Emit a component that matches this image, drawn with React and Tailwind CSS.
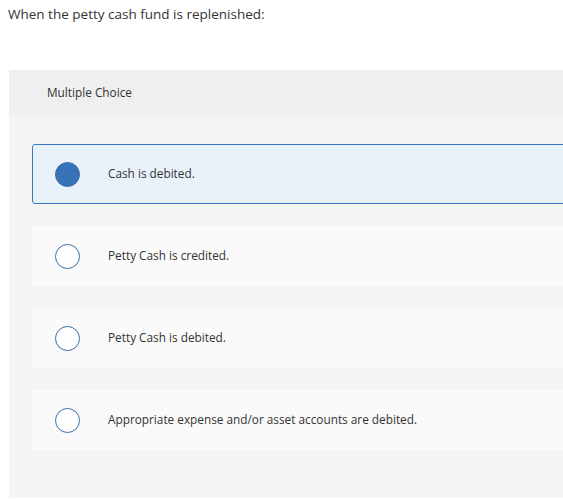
const options = [
  { text: 'Cash is debited.', selected: true },
  { text: 'Petty Cash is credited.' },
  { text: 'Petty Cash is debited.' },
  { text: 'Appropriate expense and/or asset accounts are debited.' },
]

export default function App() {
  return (
    <div className="min-h-[502px] bg-white font-['Open_Sans',sans-serif] overflow-hidden">
      <p className="pl-2 pt-[5px] text-[13.5px] leading-[18px] text-[#333]">
        When the petty cash fund is replenished:
      </p>

      <div className="ml-[9px] mt-[47px] w-[600px] bg-[#f5f5f5]">
        <div className="h-[45px] pl-[38px] flex items-center bg-[#efefef] text-[11.8px] text-[#333]">
          Multiple Choice
        </div>
        <div className="pl-[23px] pt-[29px] pb-[48px] flex flex-col gap-[22px]">
          {options.map((o) => (
            <div
              key={o.text}
              className={
                'h-[60px] rounded-l-[3px] border flex items-center pl-[22px] ' +
                (o.selected ? 'bg-[#e9f1fa] border-[#3a78c0]' : 'bg-[#fafafa] border-transparent')
              }
            >
              <div
                className={
                  'w-[25px] h-[25px] rounded-full border-[1.5px] border-[#3a6ea5] ' +
                  (o.selected ? 'bg-[#3873b9]' : 'bg-white')
                }
              />
              <span className="ml-[28px] -mt-px text-[11.8px] text-[#333]">{o.text}</span>
            </div>
          ))}
        </div>
      </div>
    </div>
  )
}
